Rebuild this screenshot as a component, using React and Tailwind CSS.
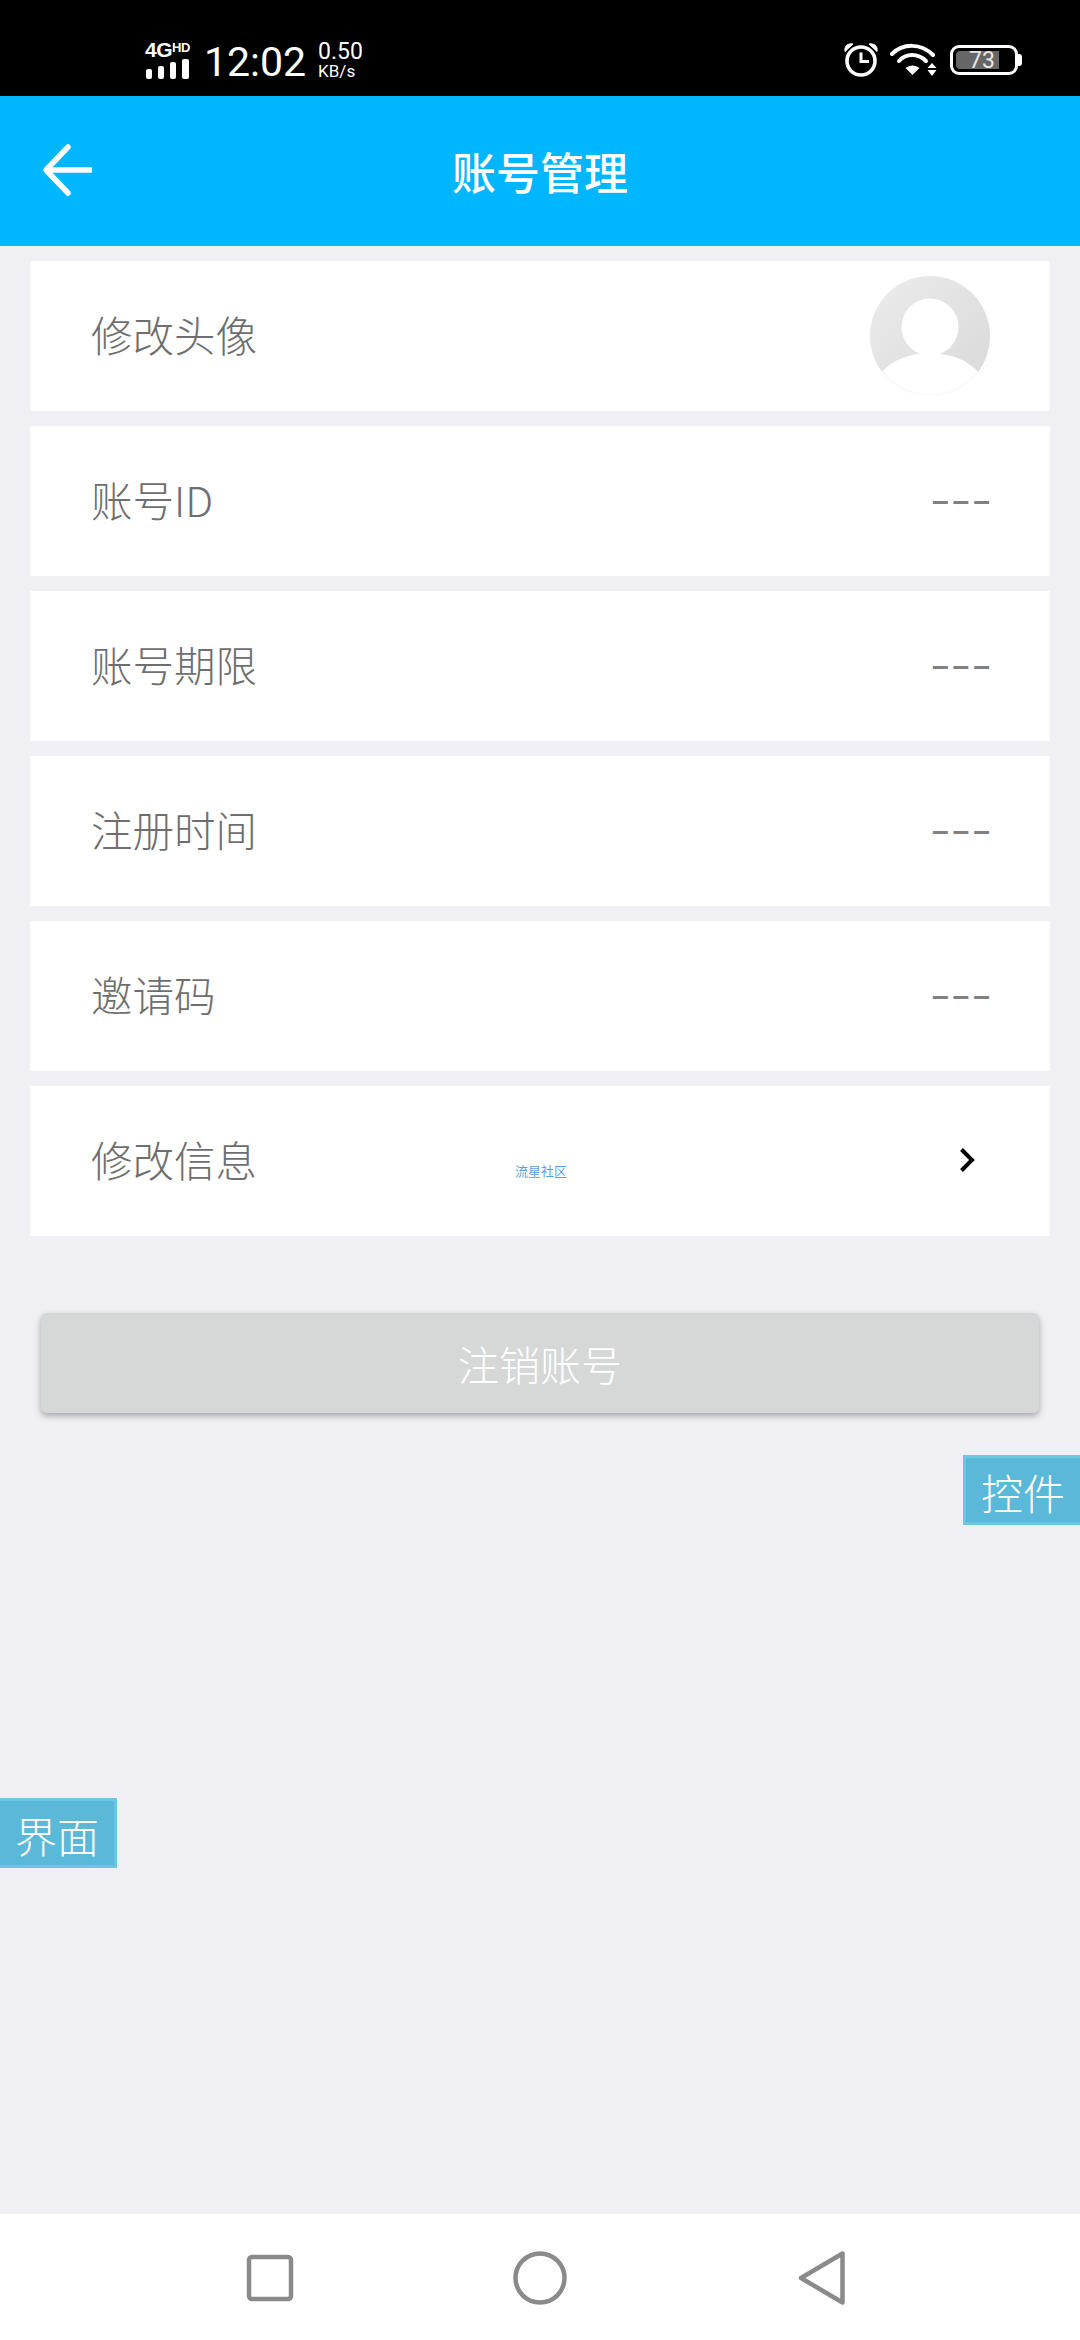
const CJK = { fontFamily: '"Noto Sans CJK SC", "Noto Sans", sans-serif' };

function Row({ label, children }) {
  return (
    <div className="h-[150px] bg-white flex items-center justify-between pl-[61px] pr-[60px]">
      <span className="text-[41.5px] leading-none text-[#6e6e6e] font-light -mt-[2px]">{label}</span>
      {children}
    </div>
  );
}

function Dashes() {
  return (
    <span className="text-[30px] leading-none font-bold text-[#808080] tracking-[4px] -mr-[4px] -mt-[1px]" style={{ fontFamily: '"Liberation Sans", sans-serif' }}>
      –––
    </span>
  );
}

function Avatar() {
  return (
    <svg width="120" height="120" viewBox="0 0 120 120">
      <defs>
        <linearGradient id="av" x1="0" y1="0" x2="1" y2="1">
          <stop offset="0" stopColor="#ececec" />
          <stop offset="1" stopColor="#d8d8d8" />
        </linearGradient>
        <clipPath id="cl"><circle cx="60" cy="60" r="60" /></clipPath>
      </defs>
      <circle cx="60" cy="60" r="60" fill="url(#av)" />
      <g clipPath="url(#cl)">
        <ellipse cx="60" cy="118" rx="57" ry="41" fill="#ffffff" />
        <rect x="0" y="118" width="120" height="2" fill="#ffffff" />
      </g>
      <circle cx="60" cy="51" r="28.5" fill="#ffffff" />
      <path d="M14 97 A60 60 0 0 0 106 97" fill="none" stroke="#f8f8f8" strokeWidth="1" />
    </svg>
  );
}

function StatusBar() {
  return (
    <div className="h-[96px] bg-black flex items-start text-white relative shrink-0" style={{ fontFamily: 'Roboto, sans-serif' }}>
      <div className="ml-[145px] mt-[37px] w-[46px] flex flex-col">
        <span className="text-[21px] leading-[21px] font-bold tracking-[-0.5px] whitespace-nowrap" style={{ fontFamily: '"Liberation Sans", sans-serif' }}>
          4G<span className="text-[13px] align-[5px]">HD</span>
        </span>
        <svg width="44" height="22" viewBox="0 0 44 22" className="-mt-[2px]">
          <rect x="1" y="11" width="6" height="10" rx="2" fill="#fff" />
          <rect x="13" y="8" width="6" height="13" rx="2" fill="#fff" />
          <rect x="25" y="4" width="6" height="17" rx="2" fill="#fff" />
          <rect x="37" y="1" width="7" height="20" rx="2" fill="#fff" />
        </svg>
      </div>
      <span className="ml-[13px] mt-[38px] text-[41px] leading-[48px]">12:02</span>
      <div className="ml-[12px] mt-[40px] flex flex-col">
        <span className="text-[23px] leading-[23px]">0.50</span>
        <span className="text-[17px] leading-[17px]">KB/s</span>
      </div>
      <div className="ml-auto mr-[58px] mt-[42px] flex items-start">
        <svg width="36" height="35" viewBox="0 0 36 35" fill="none" stroke="#fff">
          <circle cx="18" cy="19" r="14" strokeWidth="3.6" />
          <path d="M18 10.5V19.5H26" strokeWidth="3" />
          <path d="M2 9.5 C1 4 5 1 10 2 Z" fill="#fff" strokeWidth="1" />
          <path d="M34 9.5 C35 4 31 1 26 2 Z" fill="#fff" strokeWidth="1" />
        </svg>
        <svg width="48" height="35" viewBox="0 0 48 35" fill="none" stroke="#fff" className="ml-[11px]">
          <path d="M2 12 C13 1 31 1 43 13" strokeWidth="4" strokeLinecap="round" />
          <path d="M9 19 C16 11 28 11 36 19" strokeWidth="4" strokeLinecap="round" />
          <path d="M15.5 26 L22.5 33 L29.5 26 C25 22.5 20 22.5 15.5 26Z" fill="#fff" stroke="none" />
          <path d="M42 21 L46.5 26 H37.5Z M42 34 L46.5 28 H37.5Z" fill="#fff" stroke="none" />
        </svg>
        <div className="ml-[12px] mt-[3px] flex items-center">
          <div className="w-[68px] h-[30px] border-[3px] border-white rounded-[9px] relative p-[3px] overflow-hidden">
            <div className="h-full w-[43px] bg-[#666666] rounded-l-[4px]" />
            <span className="absolute inset-0 flex items-center justify-center text-[23px] leading-none text-[#e8e8e8] -ml-[4px]">73</span>
          </div>
          <div className="w-[4px] h-[12px] bg-white rounded-r-[3px]" />
        </div>
      </div>
    </div>
  );
}

function FloatTag({ children, className }) {
  return (
    <div className={`absolute h-[70px] w-[117px] bg-[#5ab8d8] border-[3px] border-[#6cc5e2] flex items-center justify-center text-[42px] font-light leading-none text-white ${className}`}>
      <span className="mt-[3px]">{children}</span>
    </div>
  );
}

export default function App() {
  return (
    <div className="w-[1080px] h-[2340px] bg-[#efeff4] flex flex-col relative overflow-hidden" style={CJK}>
      <StatusBar />
      <header className="h-[150px] bg-[#00b6ff] shrink-0 flex items-center justify-center relative">
        <svg width="54" height="54" viewBox="0 0 54 54" fill="none" stroke="#fff" strokeWidth="5.5" strokeLinecap="round" strokeLinejoin="round" className="absolute left-[42px] top-[47px]">
          <path d="M4 27H50" strokeLinecap="butt" />
          <path d="M26 4L4 27L26 50" />
        </svg>
        <h1 className="text-[44px] leading-none text-white font-medium -mt-[1px]">账号管理</h1>
      </header>
      <main className="flex-1 relative">
        <div className="pt-[15px] px-[30px] flex flex-col gap-[15px]">
          <Row label="修改头像"><Avatar /></Row>
          <Row label="账号ID"><Dashes /></Row>
          <Row label="账号期限"><Dashes /></Row>
          <Row label="注册时间"><Dashes /></Row>
          <Row label="邀请码"><Dashes /></Row>
          <Row label="修改信息">
            <svg width="16" height="26" viewBox="0 0 16 26" fill="none" stroke="#000" strokeWidth="4" className="mr-[15px] -mt-[3px]">
              <path d="M2.5 2.5L13 13L2.5 23.5" />
            </svg>
          </Row>
        </div>
        <button className="block ml-[41px] mt-[77px] w-[998px] h-[100px] bg-[#d6d8d8] rounded-[6px] shadow-[0_3px_6px_rgba(0,0,0,0.3)] text-[41px] font-light leading-none text-white">
          注销账号
        </button>
        <span className="absolute left-[515px] top-[918px] text-[13px] leading-none text-[#5a9fe0]">流星社区</span>
        <FloatTag className="right-0 top-[1209px] border-r-0">控件</FloatTag>
        <FloatTag className="left-0 top-[1552px] border-l-0">界面</FloatTag>
      </main>
      <nav className="h-[126px] bg-white shrink-0 flex items-center relative">
        <svg width="48" height="48" viewBox="0 0 48 48" fill="none" stroke="#8a8a8a" strokeWidth="4.5" className="ml-[246px] mt-[2px]">
          <rect x="3" y="3" width="42" height="42" rx="3" />
        </svg>
        <svg width="54" height="54" viewBox="0 0 54 54" fill="none" stroke="#8a8a8a" strokeWidth="4.5" className="ml-[219px] mt-[2px]">
          <circle cx="27" cy="27" r="24.5" />
        </svg>
        <svg width="48" height="56" viewBox="0 0 48 56" fill="none" stroke="#8a8a8a" strokeWidth="4.5" strokeLinejoin="round" className="ml-[231px] mt-[2px]">
          <path d="M44.5 3.5V52.5L3 28Z" />
        </svg>
      </nav>
    </div>
  );
}
